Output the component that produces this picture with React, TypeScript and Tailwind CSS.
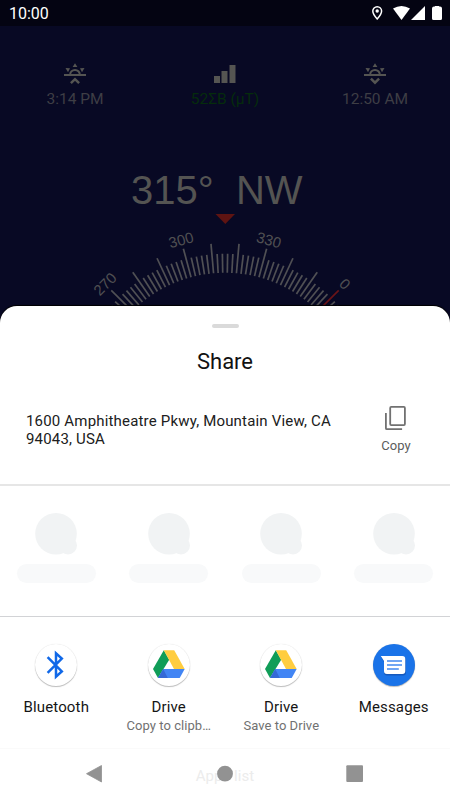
import React from 'react';

const CENTER_X = 225;
const CENTER_Y = 404;

// Heading is 315°, so the long marks fall halfway between the tens of the dial.
const majorTicks = [-55, -45, -35, -25, -15, -5, 5, 15, 25, 35, 45, 55];
const minorTicks = Array.from({ length: 56 }, (_, i) => i * 2 - 55).filter(
  angle => !majorTicks.includes(angle)
);

const labels = [
  { angle: -45, text: '270' },
  { angle: -15, text: '300' },
  { angle: 15, text: '330' },
  { angle: 45, text: '0' },
];

const CompassDial: React.FC = () => (
  <svg width="450" height="96" viewBox="0 210 450 96" className="block">
    <path d="M215.500 214h19.500l-9.700 10z" fill="#5e1412" />
    {minorTicks.map(angle => (
      <line
        key={angle}
        x1={CENTER_X}
        x2={CENTER_X}
        y1="253.8"
        y2="272.8"
        stroke="#505054"
        strokeWidth="1.7"
        transform={`rotate(${angle} ${CENTER_X} ${CENTER_Y})`}
      />
    ))}
    {majorTicks.map(angle => (
      <line
        key={angle}
        x1={CENTER_X}
        x2={CENTER_X}
        y1="243.2"
        y2="272.8"
        stroke={angle === 45 ? '#6a1418' : '#505054'}
        strokeWidth="1.7"
        transform={`rotate(${angle} ${CENTER_X} ${CENTER_Y})`}
      />
    ))}
    {labels.map(({ angle, text }) => (
      <text
        key={text}
        x={CENTER_X}
        y="239.5"
        textAnchor="middle"
        fontSize="15"
        fill="#505052"
        className="font-['Liberation_Sans',sans-serif]"
        transform={`rotate(${angle} ${CENTER_X} ${CENTER_Y})`}
      >
        {text}
      </text>
    ))}
  </svg>
);

const SunIcon: React.FC<{ rising: boolean }> = ({ rising }) => (
  <svg width="22" height="22" viewBox="0 0 22 22" fill="none" stroke="#555552" strokeWidth="2">
    <path d="M0 12h22" strokeWidth="2" />
    <path d="M6.200 11.500a4.800 4.600 0 0 1 9.600 0" />
    <path d="M11 .2l2.400 3.800H8.600zM1.500 5.100l4.500.2-2 3.900zM20.500 5.100l-4.500.2 2 3.900z" fill="#555552" stroke="none" />
    <path d={rising ? 'M6.900 20.200l4.100-4 4.100 4' : 'M6.900 15.700l4.100 4 4.100-4'} strokeWidth="2.5" />
  </svg>
);

const StatusBar: React.FC = () => (
  <div className="h-[26px] bg-[#040412] flex items-center justify-between pl-[9px] pr-2">
    <span className="text-white text-[16px] leading-[26px] pt-[2px]">10:00</span>
    <svg width="72" height="16" viewBox="370 5 72 16" fill="#fff">
      <path d="M377.200 6.700a4.400 4.400 0 0 0-4.400 4.400c0 3.200 4.400 7.900 4.400 7.900s4.400-4.700 4.400-7.900a4.400 4.400 0 0 0-4.400-4.400z" fill="none" stroke="#fff" strokeWidth="1.5" />
      <circle cx="377.200" cy="11" r="1.700" />
      <path d="M393 8.600Q401.500 3.500 410 8.600L401.500 20z" />
      <path d="M425 6v14h-14z" />
      <path d="M434 6.500h1V6h4v.5h1a2 2 0 0 1 2 2V18.500a1.500 1.500 0 0 1-1.500 1.500h-7a1.500 1.500 0 0 1-1.500-1.500V8.500a2 2 0 0 1 2-2z" />
    </svg>
  </div>
);

const CompassScreen: React.FC = () => (
  <div className="h-[306px] flex flex-col">
    <StatusBar />
    <div className="grid grid-cols-3 pt-[37px] h-[142px] text-[15.5px] leading-[20px] text-[#3e3e45]">
      <div className="flex flex-col items-center">
        <SunIcon rising />
        <span className="mt-[4px]">3:14 PM</span>
      </div>
      <div className="flex flex-col items-center">
        <svg width="22" height="22" viewBox="0 0 22 22" fill="#555552">
          <path d="M0 13h6v7H0zM7.500 8h6v12h-6zM15.500 2h6v18h-6z" />
        </svg>
        <span className="mt-[4px] text-[#052c0c]">52ΣB (µT)</span>
      </div>
      <div className="flex flex-col items-center">
        <SunIcon rising={false} />
        <span className="mt-[4px]">12:50 AM</span>
      </div>
    </div>
    <div className="h-[42px] pl-[131px] text-[40px] leading-[44px] text-[#545452] whitespace-pre font-['Liberation_Sans',sans-serif]">
      {'315°  NW'}
    </div>
    <CompassDial />
  </div>
);

const BluetoothIcon: React.FC = () => (
  <svg width="42" height="42" viewBox="0 0 42 42" fill="none" stroke="#1068e8" strokeWidth="2.5">
    <path d="M12.600 13.200l14.200 14.200-5.800 5.200V9.400l5.800 5.200-14.200 14.200" />
  </svg>
);

const DriveIcon: React.FC = () => (
  <svg width="42" height="42" viewBox="0 0 42 42">
    <path d="M15.800 6.300l5.400 9.500L10 34 5 25z" fill="#109d58" />
    <path d="M15.800 6.300h10.400L36.700 25H26z" fill="#ffcd40" />
    <path d="M15.200 25h21.500l-5 9H10z" fill="#4285f4" />
    <path d="M15.200 25l4.600 9H10z" fill="#3569d6" />
  </svg>
);

const MessagesIcon: React.FC = () => (
  <svg width="42" height="42" viewBox="0 0 42 42">
    <path d="M8 13h22a3 3 0 0 1 3 3v12.500a3 3 0 0 1-3 3H14a3 3 0 0 1-3-3V18z" fill="#1559bd" />
    <path d="M7.800 12h21.500a3 3 0 0 1 3 3v12a3 3 0 0 1-3 3H14a3 3 0 0 1-3-3V17z" fill="#fff" />
    <path d="M14 17h15M14 21h15M14 25h11.800" stroke="#70a6f3" strokeWidth="1.900" />
  </svg>
);

interface ShareTarget {
  id: string;
  label: string;
  detail?: string;
  icon: React.ReactNode;
  circle: string;
}

const targets: ShareTarget[] = [
  { id: 'bluetooth', label: 'Bluetooth', icon: <BluetoothIcon />, circle: 'bg-white' },
  { id: 'drive-copy', label: 'Drive', detail: 'Copy to clipb…', icon: <DriveIcon />, circle: 'bg-white' },
  { id: 'drive-save', label: 'Drive', detail: 'Save to Drive', icon: <DriveIcon />, circle: 'bg-white' },
  { id: 'messages', label: 'Messages', icon: <MessagesIcon />, circle: 'bg-[#1a73e8]' },
];

const ContactPlaceholder: React.FC = () => (
  <div className="flex flex-col items-center">
    <svg width="42" height="42" viewBox="0 0 42 42" fill="#f1f3f4">
      <circle cx="21" cy="20.800" r="20.800" />
      <circle cx="33" cy="32.500" r="9" />
    </svg>
    <div className="mt-[9px] w-[79px] h-[19px] rounded-full bg-[#f8f9fa]" />
  </div>
);

const ShareSheet: React.FC = () => (
  <div className="flex-1 bg-white rounded-t-[17px] shadow-[0_-1px_1px_#000] flex flex-col">
    <div className="mx-auto mt-[18px] w-[27px] h-1 rounded-full bg-[#dadada]" />
    <h1 className="mt-[20px] text-center text-[22px] leading-[28px] text-[#111]">Share</h1>
    <div className="h-[108px] flex justify-between pl-[26px] pr-[30px] pt-[29px]">
      <p className="w-[320px] pt-[7px] text-[15px] leading-[18px] tracking-[0.18px] text-[#202020]">
        1600 Amphitheatre Pkwy, Mountain View, CA<br />
        94043, USA
      </p>
      <div className="w-[48px] flex flex-col items-center text-[#5c5c5c]">
        <svg width="24" height="26" viewBox="0 0 24 26" fill="none" stroke="#717171" strokeWidth="1.800">
          <rect x="6.200" y="1.900" width="14.700" height="18.200" rx="1" />
          <path d="M1.900 8v15.200a1 1 0 0 0 1 1h15.200" />
        </svg>
        <span className="mt-[7px] text-[13px] leading-[16px] tracking-[0.1px]">Copy</span>
      </div>
    </div>
    <div className="h-[2px] shrink-0 bg-[#e6e6e6]" />
    <div className="h-[130px] pt-[27px] grid grid-cols-4">
      {targets.map(target => (
        <ContactPlaceholder key={target.id} />
      ))}
    </div>
    <div className="h-px shrink-0 bg-[#d2d3d6]" />
    <div className="h-[132px] pt-[27px] grid grid-cols-4 border-b border-[#fafafa]">
      {targets.map(target => (
        <div key={target.id} className="flex flex-col items-center whitespace-nowrap">
          <div className={`w-[42px] h-[42px] rounded-full shadow-[0_1px_1px_rgba(0,0,0,0.25),0_0_1px_rgba(0,0,0,0.15)] ${target.circle}`}>
            {target.icon}
          </div>
          <span className="mt-[11px] text-[15px] leading-[20px] tracking-[0.15px] text-[#151515]">{target.label}</span>
          {target.detail && (
            <span className="text-[13px] leading-[18px] tracking-[0.05px] text-[#717171]">{target.detail}</span>
          )}
        </div>
      ))}
    </div>
    <div className="pt-[17px] text-center text-[15px] leading-[20px] tracking-[0.05px] text-[#ececec]">Apps list</div>
  </div>
);

const NavigationBar: React.FC = () => (
  <svg className="absolute left-0 bottom-0" width="450" height="52" viewBox="0 748 450 52" fill="#929292">
    <path d="M101.500 765.500v16.500L86.500 773.700z" stroke="#929292" strokeLinejoin="round" strokeWidth=".8" />
    <circle cx="225" cy="773.700" r="7.900" />
    <rect x="346.300" y="765.300" width="16.700" height="16.700" rx="1" />
  </svg>
);

const App: React.FC = () => (
  <div className="relative w-[450px] h-[800px] overflow-hidden bg-[#080924] flex flex-col font-[Roboto,sans-serif]">
    <CompassScreen />
    <ShareSheet />
    <NavigationBar />
  </div>
);

export default App;
